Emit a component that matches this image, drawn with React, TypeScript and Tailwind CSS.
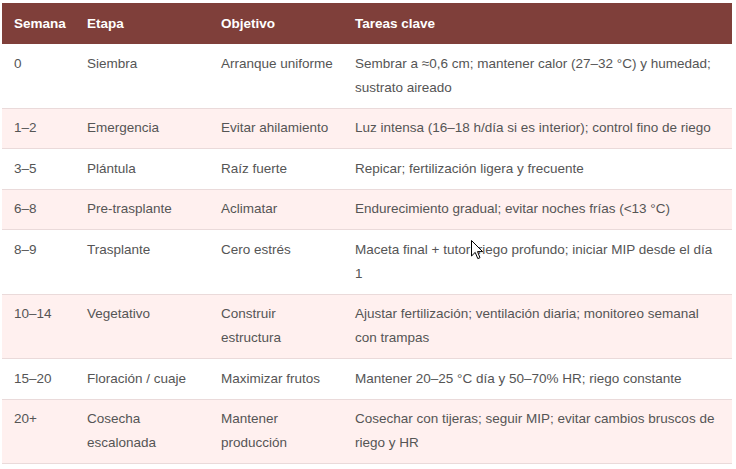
const rows = [
  {
    semana: "0",
    etapa: "Siembra",
    objetivo: "Arranque uniforme",
    tareas: "Sembrar a ≈0,6 cm; mantener calor (27–32 °C) y humedad; sustrato aireado",
  },
  {
    semana: "1–2",
    etapa: "Emergencia",
    objetivo: "Evitar ahilamiento",
    tareas: "Luz intensa (16–18 h/día si es interior); control fino de riego",
  },
  {
    semana: "3–5",
    etapa: "Plántula",
    objetivo: "Raíz fuerte",
    tareas: "Repicar; fertilización ligera y frecuente",
  },
  {
    semana: "6–8",
    etapa: "Pre-trasplante",
    objetivo: "Aclimatar",
    tareas: "Endurecimiento gradual; evitar noches frías (<13 °C)",
  },
  {
    semana: "8–9",
    etapa: "Trasplante",
    objetivo: "Cero estrés",
    tareas: "Maceta final + tutor; riego profundo; iniciar MIP desde el día 1",
  },
  {
    semana: "10–14",
    etapa: "Vegetativo",
    objetivo: "Construir estructura",
    tareas: "Ajustar fertilización; ventilación diaria; monitoreo semanal con trampas",
  },
  {
    semana: "15–20",
    etapa: "Floración / cuaje",
    objetivo: "Maximizar frutos",
    tareas: "Mantener 20–25 °C día y 50–70% HR; riego constante",
  },
  {
    semana: "20+",
    etapa: "Cosecha escalonada",
    objetivo: "Mantener producción",
    tareas: "Cosechar con tijeras; seguir MIP; evitar cambios bruscos de riego y HR",
  },
];

export default function App() {
  return (
    <div className="relative min-h-[469px] bg-white pl-[2px] pt-[3px] font-['Liberation_Sans',Arial,sans-serif]">
      <table className="w-[730px] table-fixed border-collapse text-left text-[13.5px] leading-[24px]">
        <colgroup>
          <col className="w-[73px]" />
          <col className="w-[134px]" />
          <col className="w-[134px]" />
          <col className="w-[389px]" />
        </colgroup>

        <thead>
          <tr className="bg-[#7f3f3a] text-white">
            <th className="py-[8.5px] pl-3 pr-2 font-bold">Semana</th>
            <th className="py-[8.5px] pl-3 pr-2 font-bold">Etapa</th>
            <th className="py-[8.5px] pl-3 pr-2 font-bold">Objetivo</th>
            <th className="py-[8.5px] pl-3 pr-3 font-bold">Tareas clave</th>
          </tr>
        </thead>

        <tbody>
          {rows.map((row, i) => (
            <tr
              key={row.semana}
              className={
                i % 2 === 1
                  ? "border-b border-[#eadada] bg-[#fff0ef] text-[#555555]"
                  : "border-b border-[#eadada] bg-white text-[#555555]"
              }
            >
              <td className="py-[7.75px] pl-3 pr-2 align-top">{row.semana}</td>
              <td className="py-[7.75px] pl-3 pr-2 align-top">{row.etapa}</td>
              <td className="py-[7.75px] pl-3 pr-2 align-top">{row.objetivo}</td>
              <td className="py-[7.75px] pl-3 pr-3 align-top">{row.tareas}</td>
            </tr>
          ))}
        </tbody>
      </table>

      {/* mouse pointer captured in the screenshot */}
      <svg
        className="absolute left-[471px] top-[240px]"
        width="13"
        height="20"
        viewBox="0 0 13 20"
      >
        <path
          d="M0.5 0.5 L0.5 16 L4.2 12.4 L6.8 18.6 L9 17.7 L6.5 11.6 L11.6 11.6 Z"
          fill="white"
          stroke="black"
          strokeWidth="1"
          strokeLinejoin="miter"
        />
      </svg>
    </div>
  );
}
